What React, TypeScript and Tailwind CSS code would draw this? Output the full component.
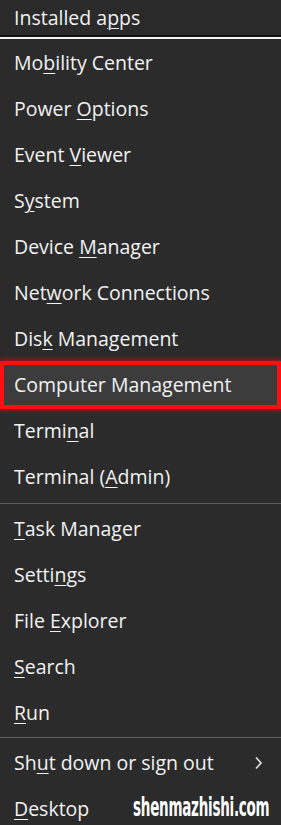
import React from "react";

type Item = { pre: string; key?: string; post?: string; highlight?: boolean; chevron?: boolean };

const groupA: Item[] = [
  { pre: "Mo", key: "b", post: "ility Center" },
  { pre: "Power ", key: "O", post: "ptions" },
  { pre: "Event ", key: "V", post: "iewer" },
  { pre: "S", key: "y", post: "stem" },
  { pre: "Device ", key: "M", post: "anager" },
  { pre: "Net", key: "w", post: "ork Connections" },
  { pre: "Dis", key: "k", post: " Management" },
  { pre: "Computer Management", highlight: true },
  { pre: "Termi", key: "n", post: "al" },
  { pre: "Terminal (", key: "A", post: "dmin)" },
];

const groupB: Item[] = [
  { pre: "", key: "T", post: "ask Manager" },
  { pre: "Setti", key: "n", post: "gs" },
  { pre: "File ", key: "E", post: "xplorer" },
  { pre: "", key: "S", post: "earch" },
  { pre: "", key: "R", post: "un" },
];

const groupC: Item[] = [
  { pre: "Sh", key: "u", post: "t down or sign out", chevron: true },
  { pre: "", key: "D", post: "esktop" },
];

function Row({ item }: { item: Item }) {
  return (
    <div
      className={
        item.highlight
          ? "flex items-center h-[48px] -my-[1px] pl-[10px] pr-3 border-4 border-[#ff1010] bg-[#3c3c3c] shadow-[0_0_5px_1px_rgba(255,0,0,0.75)] relative"
          : "flex items-center h-[46px] pl-[14px] pr-3"
      }
    >
      <span className="flex-1 whitespace-nowrap">
        {item.pre}
        {item.key && <span className="underline underline-offset-[3px] decoration-1">{item.key}</span>}
        {item.post}
      </span>
      {item.chevron && (
        <svg width="9" height="14" viewBox="0 0 9 14" className="mr-[6px]">
          <path d="M2 1.5 L7 7 L2 12.5" fill="none" stroke="#e6e6e6" strokeWidth="1.6" />
        </svg>
      )}
    </div>
  );
}

export default function App() {
  return (
    <div
      className="w-[281px] h-[825px] overflow-hidden bg-[#2b2b2b] text-[#f2f2f2] text-[19.5px] relative"
      style={{ fontFamily: '"Segoe UI", "Open Sans", "Noto Sans", sans-serif' }}
    >
      <div className="flex items-center h-[35px] pl-[14px] bg-[#2a2a2a]">
        <span>
          Installed a<span className="underline underline-offset-[3px] decoration-1">p</span>ps
        </span>
      </div>
      <div className="h-[2px] bg-[#111]" />
      <div className="h-[2px] bg-[#f4f4f4]" />

      <div className="pt-[1px]">
        {groupA.map((it, i) => (
          <Row key={i} item={it} />
        ))}
      </div>
      <div className="h-[3px]" />
      <div className="h-[1px] bg-[#5e5e5e]" />
      <div className="h-[2px]" />
      <div>
        {groupB.map((it, i) => (
          <Row key={i} item={it} />
        ))}
      </div>
      <div className="h-[1px]" />
      <div className="h-[1px] bg-[#5e5e5e]" />
      <div className="h-[2px]" />
      <div>
        {groupC.map((it, i) => (
          <Row key={i} item={it} />
        ))}
      </div>

      <div
        className="absolute left-[133px] top-[792px] w-[137px] h-[28px] flex items-center text-white font-bold text-[27px] leading-none tracking-[-0.5px]"
        style={{ fontFamily: '"DejaVu Sans", sans-serif' }}
      >
        <span className="inline-block origin-left scale-x-[0.5] whitespace-nowrap">shenmazhishi.com</span>
      </div>
    </div>
  );
}
